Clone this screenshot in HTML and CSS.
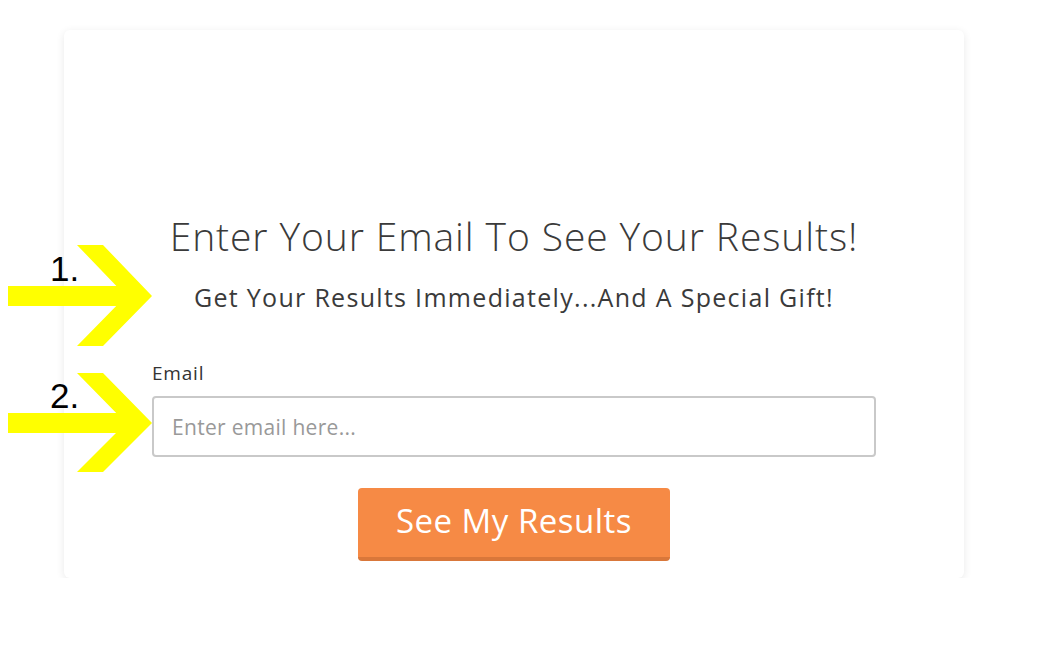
FILE: index.html
```html
<!DOCTYPE html>
<html lang="en">
<head>
    <meta charset="UTF-8">
    <title>See Your Results</title>
    <link rel="stylesheet" href="styles.css">
</head>
<body>

    <div class="card">
        <h1 class="title">Enter Your Email To See Your Results!</h1>
        <p class="subtitle">Get Your Results Immediately...And A Special Gift!</p>

        <form class="optin">
            <label class="label" for="email">Email</label>
            <input class="field" id="email" type="email" placeholder="Enter email here...">
            <button class="submit" type="button">See My Results</button>
        </form>
    </div>

    <!-- hint arrows drawn over the page -->
    <svg class="arrows" width="160" height="240" viewBox="0 0 160 240">
        <g fill="#ffff00">
            <rect x="8" y="41" width="120" height="20"/>
            <polygon points="77,0 103,0 152,51 103,101 77,101 126,51"/>
            <rect x="8" y="168" width="120" height="20"/>
            <polygon points="77,128 103,128 152,178 103,227 77,227 126,178"/>
        </g>
    </svg>
    <span class="step step-one">1.</span>
    <span class="step step-two">2.</span>

</body>
</html>
```

FILE: styles.css
```css
/* --- BASE --- */
body {
    margin: 0;
    padding: 0;
    background-color: #ffffff;
    color: #3a3a3a;
    font-family: 'Open Sans', sans-serif;
}

/* --- CARD --- */
.card {
    box-sizing: border-box;
    width: 900px;
    height: 548px;
    margin: 30px 0 0 64px;
    padding: 182px 88px 0;
    background-color: #fff;
    border-radius: 6px;
    box-shadow: 0 2px 8px rgba(0, 0, 0, 0.09);
    text-align: center;
}

.title {
    margin: 0;
    font-size: 39px;
    font-weight: 300;
    letter-spacing: 0.9px;
    line-height: 48px;
    color: #3a3a3a;
}

.subtitle {
    margin: 21px 0 0;
    font-size: 25px;
    font-weight: 400;
    letter-spacing: 1.3px;
    line-height: 32px;
    color: #3a3a3a;
}

/* --- FORM --- */
.optin {
    display: flex;
    flex-direction: column;
    align-items: center;
    margin-top: 48px;
}

.label {
    align-self: flex-start;
    font-size: 19px;
    letter-spacing: 0.8px;
    line-height: 24px;
    color: #333;
}

.field {
    box-sizing: border-box;
    width: 724px;
    height: 61px;
    margin-top: 11px;
    padding: 0 18px;
    border: 2px solid #c9c9c9;
    border-radius: 4px;
    font-family: 'Open Sans', sans-serif;
    font-size: 21px;
    letter-spacing: 0.3px;
    color: #333;
}

.field::placeholder {
    color: #999;
}

.submit {
    width: 312px;
    height: 73px;
    margin-top: 31px;
    padding: 0 0 4px;
    border: none;
    border-bottom: 4px solid #d9773a;
    border-radius: 4px;
    background-color: #f68a45;
    color: #fff;
    font-family: 'Open Sans', sans-serif;
    font-size: 33px;
    letter-spacing: 0.5px;
    cursor: pointer;
}

/* --- HINT ARROWS --- */
.arrows {
    position: absolute;
    top: 245px;
    left: 0;
}

.step {
    position: absolute;
    left: 50px;
    font-family: 'Liberation Sans', sans-serif;
    font-size: 35px;
    line-height: 40px;
    color: #000;
}

.step-one {
    top: 249px;
}

.step-two {
    top: 376px;
}
```
